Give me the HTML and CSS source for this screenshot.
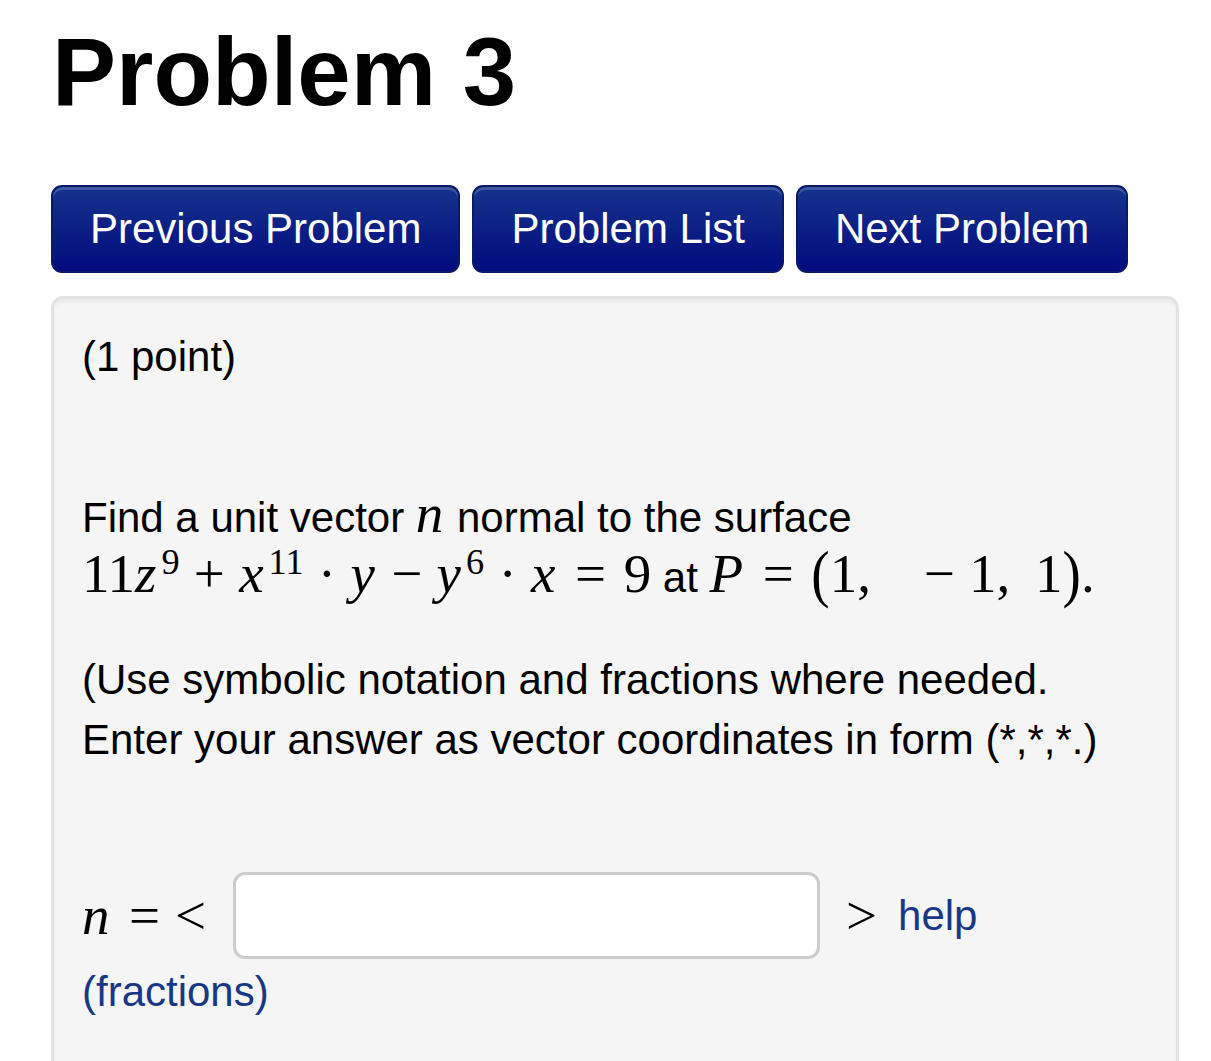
FILE: index.html
```html
<!DOCTYPE html>
<html lang="en">

<head>
    <meta charset="UTF-8">
    <title>Problem 3</title>

    <link rel="stylesheet" href="styles.css">
</head>

<body>

    <div id="page">
        <h1 id="title">Problem 3</h1>

        <nav id="problemnav">
            <a class="navbtn" href="#">Previous Problem</a>
            <a class="navbtn" href="#">Problem List</a>
            <a class="navbtn" href="#">Next Problem</a>
        </nav>

        <section id="problem">
            <p class="points">(1 point)</p>

            <p class="statement">
                Find a unit vector <span class="mi">n</span> normal to the surface<br>
                <span class="math"><span class="mn">11</span><span class="mi">z</span><sup>9</sup><span class="bin">+</span><span class="mi">x</span><sup>11</sup><span class="bin">&middot;</span><span class="mi">y</span><span class="bin">&minus;</span><span class="mi">y</span><sup>6</sup><span class="bin">&middot;</span><span class="mi">x</span><span class="rel">=</span><span class="mn">9</span></span>
                at
                <span class="math"><span class="mi">P</span><span class="rel">=</span><span class="paren">(</span><span class="mn">1,</span><span class="wide"></span><span class="bin">&minus;</span><span class="mn">1,</span><span class="thin"></span><span class="mn">1</span><span class="paren">)</span>.</span>
            </p>

            <p class="statement">
                (Use symbolic notation and fractions where needed.<br>
                Enter your answer as vector coordinates in form (*,*,*.)
            </p>

            <div class="answer">
                <span class="math"><span class="mi">n</span><span class="rel">=</span><span class="lt">&lt;</span></span>
                <input class="answerbox" type="text">
                <span class="math gt">&gt;</span>
                <a class="link" href="#">help</a>
            </div>
            <a class="link hint" href="#">(fractions)</a>
        </section>
    </div>

</body>

</html>
```

FILE: styles.css
```css
body {
    margin: 0;
    font-family: "Liberation Sans", Arial, sans-serif;
    color: #000;
    background: #fff;
}

#page {
    padding: 0 32px 0 51px;
}

#title {
    margin: 24px 0 0 1px;
    font-size: 96px;
    line-height: 1;
    font-weight: bold;
}

#problemnav {
    display: flex;
    gap: 12px;
    margin: 65px 0 23px;
}

.navbtn {
    display: flex;
    align-items: center;
    height: 84px;
    padding: 0 37px;
    font-size: 42px;
    color: #fff;
    text-decoration: none;
    background: linear-gradient(#16338d, #020b7e);
    border: 2px solid #0a1a66;
    border-radius: 11px;
    box-shadow: inset 0 3px 0 rgba(255, 255, 255, .18);
}

#problem {
    min-height: 800px;
    padding: 28px 28px;
    background-color: #f5f5f5;
    border: 3px solid #e3e3e3;
    border-radius: 12px;
    box-shadow: inset 0 3px 3px rgba(0, 0, 0, .04);
    font-size: 42px;
    line-height: 60px;
}

#problem p {
    margin: 0;
}

.points {
    margin-bottom: 101px !important;
}

.statement {
    margin-bottom: 42px !important;
}

.math {
    font-family: "Liberation Serif", "Times New Roman", serif;
    font-size: 55px;
    line-height: 0;
}

.mi {
    font-family: "Liberation Serif", "Times New Roman", serif;
    font-style: italic;
    font-size: 55px;
    line-height: 0;
    padding-right: 2px;
}

.math sup {
    font-size: 0.66em;
    line-height: 0;
    vertical-align: 0.5em;
    margin-left: 3px;
}

.paren {
    display: inline-block;
    transform: scaleY(1.15);
}

.bin {
    margin: 0 0.26em;
}

.rel {
    margin: 0 0.32em;
}

.wide {
    display: inline-block;
    width: 0.7em;
}

.thin {
    display: inline-block;
    width: 0.45em;
}

.answer {
    display: flex;
    align-items: center;
    margin-top: 102px;
    height: 87px;
}

.lt {
    margin-left: -0.05em;
}

.answerbox {
    box-sizing: border-box;
    width: 587px;
    height: 87px;
    margin: 0 26px 0 27px;
    background: #fff;
    border: 3px solid #cccccc;
    border-radius: 12px;
    font-size: 42px;
}

.gt {
    margin-right: 21px;
}

.link {
    color: #183887;
    text-decoration: none;
}

.hint {
    display: block;
    margin-top: 3px;
}
```
